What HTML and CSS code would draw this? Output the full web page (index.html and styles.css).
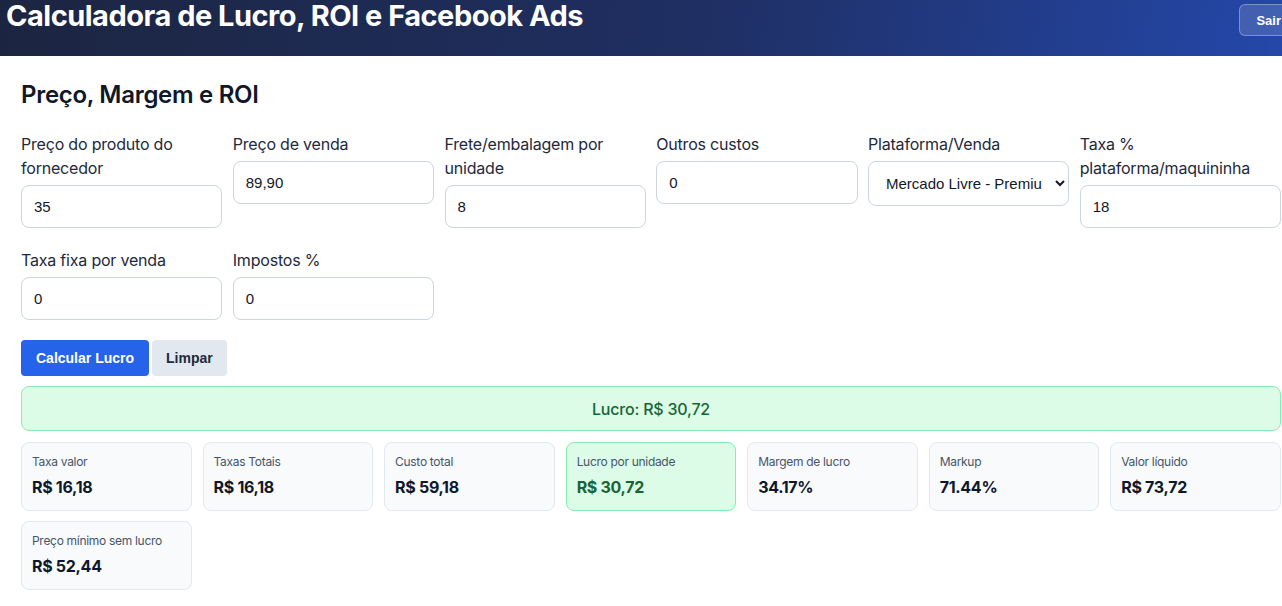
FILE: index.html
```html
<!DOCTYPE html>
<html lang="pt-BR">
<head>
<meta charset="utf-8">
<title>Calculadora de Lucro, ROI e Facebook Ads</title>
<link rel="stylesheet" href="styles.css">
</head>
<body>
<header class="topbar">
  <h1 class="app-title">Calculadora de Lucro, ROI e Facebook Ads</h1>
  <button class="logout" type="button">Sair</button>
</header>
<main class="panel">
  <h2 class="section-title">Preço, Margem e ROI</h2>
  <div class="form-grid">
    <div class="field">
      <label class="field-label">Preço do produto do fornecedor</label>
      <input class="field-input" type="text" value="35">
    </div>
    <div class="field">
      <label class="field-label">Preço de venda</label>
      <input class="field-input" type="text" value="89,90">
    </div>
    <div class="field">
      <label class="field-label">Frete/embalagem por unidade</label>
      <input class="field-input" type="text" value="8">
    </div>
    <div class="field">
      <label class="field-label">Outros custos</label>
      <input class="field-input" type="text" value="0">
    </div>
    <div class="field">
      <label class="field-label">Plataforma/Venda</label>
      <select class="field-select">
        <option>Mercado Livre - Premium</option>
        <option>Mercado Livre - Clássico</option>
        <option>Shopee</option>
      </select>
    </div>
    <div class="field">
      <label class="field-label">Taxa % plataforma/maquininha</label>
      <input class="field-input" type="text" value="18">
    </div>
    <div class="field">
      <label class="field-label">Taxa fixa por venda</label>
      <input class="field-input" type="text" value="0">
    </div>
    <div class="field">
      <label class="field-label">Impostos %</label>
      <input class="field-input" type="text" value="0">
    </div>
  </div>
  <div class="actions">
    <button class="btn btn-primary" type="button">Calcular Lucro</button>
    <button class="btn btn-secondary" type="button">Limpar</button>
  </div>
  <div class="result-banner">Lucro: R$ 30,72</div>
  <div class="stats">
    <div class="stat"><div class="stat-label">Taxa valor</div><div class="stat-value">R$ 16,18</div></div>
    <div class="stat"><div class="stat-label">Taxas Totais</div><div class="stat-value">R$ 16,18</div></div>
    <div class="stat"><div class="stat-label">Custo total</div><div class="stat-value">R$ 59,18</div></div>
    <div class="stat stat-good"><div class="stat-label">Lucro por unidade</div><div class="stat-value">R$ 30,72</div></div>
    <div class="stat"><div class="stat-label">Margem de lucro</div><div class="stat-value">34.17%</div></div>
    <div class="stat"><div class="stat-label">Markup</div><div class="stat-value">71.44%</div></div>
    <div class="stat"><div class="stat-label">Valor líquido</div><div class="stat-value">R$ 73,72</div></div>
    <div class="stat"><div class="stat-label">Preço mínimo sem lucro</div><div class="stat-value">R$ 52,44</div></div>
  </div>
</main>
</body>
</html>
```

FILE: styles.css
```css
* { box-sizing: border-box; }

html, body {
  margin: 0;
  padding: 0;
  background: #ffffff;
  overflow: hidden;
}

body {
  font-family: Inter, "Noto Sans", sans-serif;
  color: #1e293b;
}

.topbar {
  height: 56px;
  display: flex;
  justify-content: space-between;
  align-items: flex-start;
  overflow: hidden;
  background: linear-gradient(100deg, #1c2540 0%, #1f2f63 55%, #2447a9 100%);
  padding: 1px 0 0 6px;
}

.app-title {
  margin: 0;
  color: #ffffff;
  font-size: 29px;
  line-height: 30px;
  font-weight: 700;
  letter-spacing: -0.5px;
}

.logout {
  margin-top: 3px;
  margin-right: -16px;
  height: 32px;
  padding: 0 16px;
  border-radius: 6px;
  border: 1px solid rgba(255, 255, 255, 0.3);
  background: rgba(255, 255, 255, 0.14);
  color: #ffffff;
  font-family: "Liberation Sans", Arial, sans-serif;
  font-weight: 700;
  font-size: 13px;
}

.panel {
  padding: 23px 1px 0 21px;
}

.section-title {
  margin: 0 0 21px;
  font-size: 24px;
  line-height: 32px;
  font-weight: 600;
  color: #0f172a;
  letter-spacing: -0.3px;
}

.form-grid {
  display: grid;
  grid-template-columns: repeat(6, 1fr);
  column-gap: 10.5px;
  row-gap: 20px;
  align-items: start;
}

.field {
  display: flex;
  flex-direction: column;
}

.field-label {
  font-size: 16px;
  line-height: 24px;
  color: #1e293b;
  margin-bottom: 5px;
  letter-spacing: -0.2px;
}

.field-input,
.field-select {
  width: 100%;
  height: 43px;
  border: 1px solid #cbd5e1;
  border-radius: 8px;
  padding: 0 12px;
  font-family: "Liberation Sans", Arial, sans-serif;
  font-size: 15px;
  color: #111827;
  background: #ffffff;
}

.field-select {
  height: 45px;
  padding: 0 10px 0 13px;
  font-size: 15px;
}

.actions {
  margin-top: 20px;
  display: flex;
  gap: 3px;
}

.btn {
  height: 36px;
  border: none;
  border-radius: 4px;
  font-family: "Liberation Sans", Arial, sans-serif;
  font-weight: 700;
  font-size: 14px;
  padding: 0 15px;
}

.btn-primary {
  background: #2563eb;
  color: #ffffff;
}

.btn-secondary {
  background: #e2e8f0;
  color: #1e293b;
  padding: 0 14px;
}

.result-banner {
  margin-top: 10px;
  height: 45px;
  display: flex;
  align-items: center;
  justify-content: center;
  background: #dcfce7;
  border: 1px solid #86efac;
  border-radius: 8px;
  color: #166534;
  font-size: 16px;
  font-weight: 500;
  letter-spacing: -0.2px;
}

.stats {
  margin-top: 11px;
  display: grid;
  grid-template-columns: repeat(7, 1fr);
  column-gap: 10.8px;
  row-gap: 10px;
}

.stat {
  background: #f8fafc;
  border: 1px solid #e2e8f0;
  border-radius: 8px;
  padding: 10px 10px 11px 10px;
}

.stat-label {
  font-size: 12px;
  line-height: 18px;
  color: #475569;
  letter-spacing: -0.3px;
}

.stat-value {
  margin-top: 4px;
  font-size: 16px;
  line-height: 24px;
  font-weight: 700;
  color: #0f172a;
  letter-spacing: -0.3px;
}

.stat-good {
  background: #dcfce7;
  border-color: #86efac;
}

.stat-good .stat-value {
  color: #166534;
}
```
